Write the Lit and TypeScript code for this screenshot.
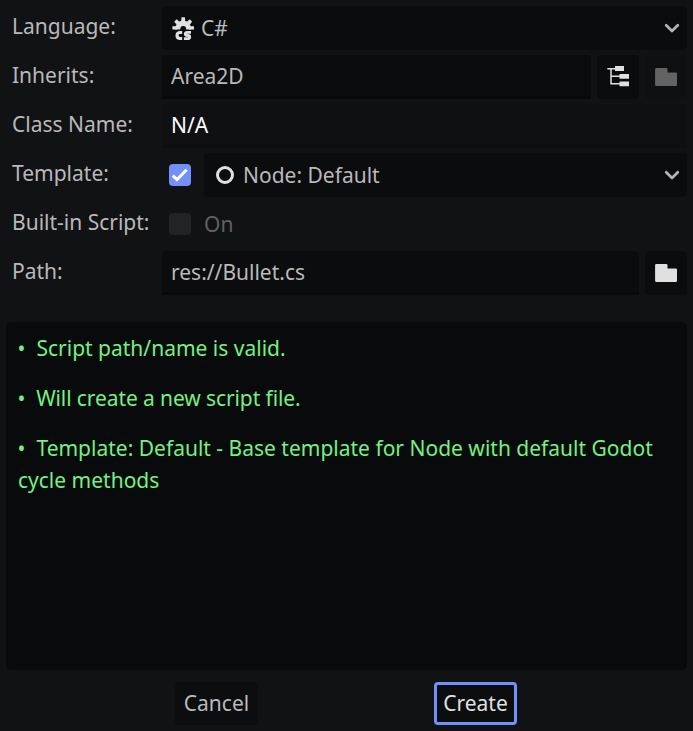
import { LitElement, html, css, svg } from "lit";
import { customElement } from "lit/decorators.js";

const chevron = html`<svg class="chevron" width="24" height="24" viewBox="0 0 24 24">
  <path d="M6.2 9.2 12 15 17.8 9.2" fill="none" stroke="#b4b4b5" stroke-width="2.7" stroke-linecap="round" stroke-linejoin="round" />
</svg>`;

const folder = html`<svg width="24" height="24" viewBox="0 0 24 24">
  <path d="M2.4 3H12.2q1.3 0 1.3 1.2V7.4H21.8Q23 7.4 23 8.6V19.8Q23 21 21.8 21H2.4Q1.1 21 1.1 19.8V4.2Q1.1 3 2.4 3Z" fill="#e0e0e0" />
</svg>`;

const tree = html`<svg width="24" height="24" viewBox="0 0 24 24">
  <path d="M1.3 3.7H10M5 3.7V18.8H14M5 11.3H14" fill="none" stroke="#e0e0e0" stroke-width="1.5" />
  <path d="M9 1H18V6H9ZM13.5 9H23V13.7H13.5ZM13.5 16.4H23V21.3H13.5Z" fill="#e0e0e0" />
</svg>`;

const csharp = html`<svg width="24" height="24" viewBox="0 0 24 24">
  <path d="M4 13.5A8.2 9 0 0 1 20.4 13.5H15.2A3 3.4 0 0 0 9.2 13.5Z" fill="#e0e0e0" />
  <path d="M1.4 10.3H6V13.5H1.4ZM18 10.3H23V13.5H18Z" fill="#e0e0e0" />
  ${[-45, 0, 45].map(
    (a) => svg`<path d="M10.5 1.3H13.9L14.4 7H10Z" fill="#e0e0e0" transform="rotate(${a} 12.2 12.3)" />`
  )}
  <path d="M11.2 16.5H9.2Q6 16.5 6 19.5T9.2 22.5H11.2" fill="none" stroke="#e0e0e0" stroke-width="3.1" />
  <path d="M20 16.4H16.4Q14.3 16.4 14.3 18T16.4 19.5H17Q18.7 19.5 18.7 21.1T17 22.6H12.9" fill="none" stroke="#e0e0e0" stroke-width="2.9" />
</svg>`;

const ring = html`<svg width="24" height="24" viewBox="0 0 24 24">
  <circle cx="12" cy="12" r="7.5" fill="none" stroke="#e0e0e0" stroke-width="3" />
</svg>`;

const check = html`<svg width="22" height="22" viewBox="0 0 22 22">
  <path d="M3.8 11.6 8 15.6 17.6 5.8" fill="none" stroke="#fff" stroke-width="3" />
</svg>`;

const messages = [
  "Script path/name is valid.",
  "Will create a new script file.",
  "Template: Default - Base template for Node with default Godot cycle methods",
];

@customElement("app-root")
export class AppRoot extends LitElement {
  static styles = css`
    :host {
      display: flex;
      flex-direction: column;
      box-sizing: border-box;
      width: 693px;
      height: 731px;
      padding: 6px;
      background: #111214;
      color: #b9b9ba;
      font: 21px/30px "Noto Sans", sans-serif;
      overflow: hidden;
      white-space: nowrap;
    }
    svg { display: block; flex: none; }
    .form { display: grid; grid-template-columns: 150px 525px; grid-auto-rows: 44px; row-gap: 5px; column-gap: 6px; }
    .label { padding: 5px 0 0 6px; }
    .controls { display: flex; gap: 6px; }
    .box {
      display: flex;
      align-items: center;
      box-sizing: border-box;
      height: 44px;
      padding: 0 9px;
      border-radius: 4px;
      background: #0b0c0e;
    }
    .grow { flex: 1; }
    .input { border-bottom: 3px solid #08090a; border-radius: 4px 4px 0 0; }
    .readonly { background: #0f1012; border-bottom-color: #0d0e10; color: #fff; }
    .select { gap: 6px; padding-right: 3px; }
    .select .chevron { margin-left: auto; }
    .icon { width: 42px; }
    .off { background: #0f1012; }
    .off svg { opacity: 0.4; }
    .toggle { display: flex; align-items: center; width: 36px; padding-left: 0; }
    .tick { width: 22px; height: 22px; margin-left: 7px; border-radius: 4px; background: #222324; }
    .ticked { background: #7290fc; }
    .muted { color: #606062; line-height: 44px; }
    .messages {
      box-sizing: border-box;
      width: 681px;
      height: 348px;
      margin-top: 27px;
      padding: 10px 12px;
      border-radius: 5px;
      background: #090a0c;
      color: #73f280;
      line-height: 32px;
      white-space: normal;
    }
    .messages p { margin: 0 0 18px; text-indent: -0.4px; }
    .messages p:nth-child(2) { letter-spacing: -0.1px; }
    .actions { display: flex; gap: 176px; margin: 12px 0 0 169px; }
    .button {
      box-sizing: border-box;
      width: 83px;
      height: 43px;
      padding: 0;
      border: 3px solid #0c0d0f;
      border-radius: 4px;
      background: #0c0d0f;
      color: inherit;
      font: inherit;
      line-height: 35px;
      text-align: center;
    }
    .focused { border-color: #7290fc; color: #e0e0e0; }
  `;

  render() {
    return html`
      <div class="form">
        <div class="label">Language:</div>
        <div class="controls"><div class="box select grow">${csharp}<span>C#</span>${chevron}</div></div>

        <div class="label">Inherits:</div>
        <div class="controls">
          <div class="box input grow">Area2D</div>
          <div class="box icon">${tree}</div>
          <div class="box icon off">${folder}</div>
        </div>

        <div class="label">Class Name:</div>
        <div class="controls"><div class="box input readonly grow">N/A</div></div>

        <div class="label">Template:</div>
        <div class="controls">
          <div class="toggle"><div class="tick ticked">${check}</div></div>
          <div class="box select grow">${ring}<span>Node: Default</span>${chevron}</div>
        </div>

        <div class="label">Built-in Script:</div>
        <div class="controls">
          <div class="toggle"><div class="tick"></div></div>
          <span class="muted">On</span>
        </div>

        <div class="label">Path:</div>
        <div class="controls">
          <div class="box input grow">res://Bullet.cs</div>
          <div class="box icon">${folder}</div>
        </div>
      </div>
      <div class="messages">
        ${messages.map((m) => html`<p>${"•\u00a0 " + m}</p>`)}
      </div>
      <div class="actions">
        <button class="button">Cancel</button>
        <button class="button focused">Create</button>
      </div>
    `;
  }
}
